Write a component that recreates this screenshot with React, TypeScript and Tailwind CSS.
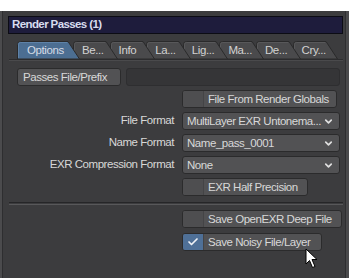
import React from 'react';
import { ChevronDown, Check } from 'lucide-react';

const font = { fontFamily: '"Liberation Sans", Arial, sans-serif' };

const tabs = [
  { label: 'Options', w: 63, active: true },
  { label: 'Be...', w: 45 },
  { label: 'Info', w: 45 },
  { label: 'La...', w: 45 },
  { label: 'Lig...', w: 45 },
  { label: 'Ma...', w: 45 },
  { label: 'De...', w: 45 },
  { label: 'Cry...', w: 45 },
];

function Tab({ label, w, active, z }: { label: string; w: number; active?: boolean; z: number }) {
  const step = active ? 56 : 36.6;
  return (
    <div className="relative h-[18px] shrink-0" style={{ width: step, zIndex: z }}>
      <svg className="absolute left-0 top-0" width={w} height={18} viewBox={`0 0 ${w} 18`}>
        <path
          d={`M0.5 18 L0.5 3.5 Q0.5 0.5 3.5 0.5 L${w - 12} 0.5 L${w - 0.5} 18 Z`}
          fill={active ? '#4c6e92' : '#4a4a4c'}
          stroke="#2a2a2b"
        />
        <path d={`M1.5 17 L1.5 3.5 Q1.5 1.5 3.5 1.5 L${w - 13} 1.5`} fill="none" stroke={active ? '#5e82a8' : '#58585a'} />
      </svg>
      <span className={`absolute top-[2px] text-[11.5px] leading-[14px] tracking-[-0.4px] ${active ? 'left-[10px] text-[#d6dce6]' : 'left-[9px] text-[#d2d2d2]'}`}>
        {label}
      </span>
    </div>
  );
}

function CheckButton({ label, width, checked }: { label: string; width: number; checked?: boolean }) {
  return (
    <div className="flex h-[18px] rounded-[3px] border border-[#2b2b2c] bg-[#525254] overflow-hidden" style={{ width }}>
      <div className={`w-[21px] h-full flex items-center justify-center border-r border-[#444446] ${checked ? 'bg-[#4f7097]' : 'bg-[#4e4e50]'}`}>
        {checked && <Check size={12} strokeWidth={3.4} color="#eef1f5" />}
      </div>
      <span className="pl-[4px] text-[11.5px] leading-[16px] tracking-[-0.45px] text-[#d8d8d8] whitespace-nowrap">{label}</span>
    </div>
  );
}

function Select({ value }: { value: string }) {
  return (
    <div className="flex items-center justify-between w-[158px] h-[18px] rounded-[3px] border border-[#2b2b2c] bg-[#525254] pl-[4px] pr-[5px]">
      <span className="text-[11.5px] leading-[16px] tracking-[-0.45px] text-[#d8d8d8] whitespace-nowrap">{value}</span>
      <ChevronDown size={11} strokeWidth={3.6} color="#e0e0e0" />
    </div>
  );
}

function Row({ label, children }: { label?: string; children: React.ReactNode }) {
  return (
    <div className="flex items-center h-[18px]">
      <div className="w-[165px] pr-[8px] text-right text-[11.5px] tracking-[-0.45px] text-[#d8d8d8] whitespace-nowrap">{label}</div>
      {children}
    </div>
  );
}

export default function App() {
  return (
    <div className="w-[349px] h-[278px] bg-white overflow-hidden" style={font}>
      <div className="h-[11px] bg-white" />
      <div className="flex h-[267px]">
        <div className="w-[3px] bg-[#4b4b4d] border-r border-[#2e2e30]" />
        <div className="flex-1 bg-[#3c3c3e] pl-[5px] pr-[2px] pt-[5px]">
          <div className="h-[18px] w-[335px] bg-[#1e1c3c] border border-[#0c0c14] flex items-center pl-[3px]">
            <span className="text-[11.5px] font-bold text-[#d8dcef] tracking-[-0.6px]">Render Passes (1)</span>
          </div>

          <div className="flex pl-[9px] mt-[7px]">
            {tabs.map((t, i) => (
              <Tab key={t.label} label={t.label} w={t.w} active={t.active} z={t.active ? 20 : 10 - i} />
            ))}
          </div>
          <div className="h-[1px] w-[334px] ml-[1px] bg-[#2c2c2e]" />
          <div className="h-[1px] w-[334px] ml-[1px] bg-[#4a4a4c]" />

          <div className="flex flex-col gap-[4px] mt-[7px] pl-[9px]">
            <div className="flex items-center gap-[5px] h-[18px]">
              <div className="w-[104px] h-[18px] rounded-[3px] border border-[#2b2b2c] bg-[#525254] pl-[5px] text-[11.5px] leading-[16px] tracking-[-0.45px] text-[#d8d8d8]">
                Passes File/Prefix
              </div>
              <div className="w-[214px] h-[18px] rounded-[3px] border border-[#2e2e30] bg-[#353537]" />
            </div>
            <Row>
              <CheckButton label="File From Render Globals" width={155} />
            </Row>
            <Row label="File Format">
              <Select value="MultiLayer EXR Untonema..." />
            </Row>
            <Row label="Name Format">
              <Select value="Name_pass_0001" />
            </Row>
            <Row label="EXR Compression Format">
              <Select value="None" />
            </Row>
            <Row>
              <CheckButton label="EXR Half Precision" width={126} />
            </Row>
          </div>

          <div className="mt-[6px] ml-[1px] w-[334px] h-[1px] bg-[#262628]" />
          <div className="mt-[1px] ml-[1px] w-[334px] h-[1px] bg-[#58585a]" />

          <div className="flex flex-col gap-[5px] mt-[5px] pl-[9px]">
            <Row>
              <CheckButton label="Save OpenEXR Deep File" width={160} />
            </Row>
            <Row>
              <div className="relative">
                <CheckButton label="Save Noisy File/Layer" width={140} checked />
                <svg className="absolute left-[123px] top-[15px]" width="14" height="21" viewBox="0 0 14 21">
                  <path d="M1 1 L1 16 L4.5 12.5 L7.5 19.5 L10 18.5 L7 11.5 L12 11.5 Z" fill="#ffffff" stroke="#000000" strokeWidth="1" strokeLinejoin="miter" />
                </svg>
              </div>
            </Row>
          </div>
        </div>
        <div className="w-[4px] bg-[#4a4a4c] border-l border-[#2e2e30]" />
      </div>
    </div>
  );
}
